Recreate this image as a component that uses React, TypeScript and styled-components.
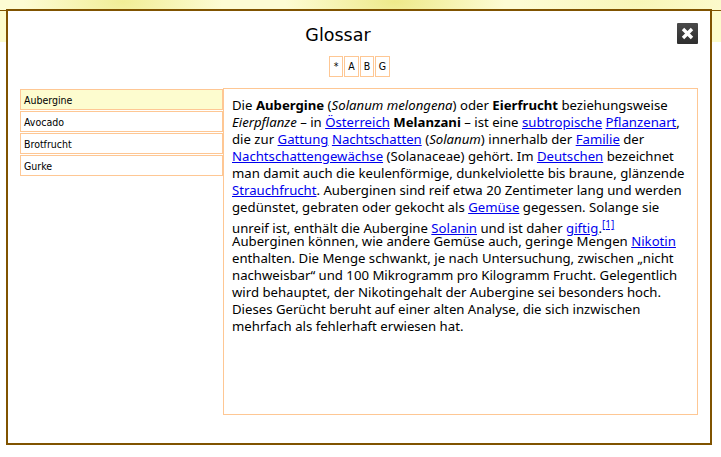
import React from "react";
import styled, { createGlobalStyle } from "styled-components";

const Global = createGlobalStyle`
  html, body { margin: 0; padding: 0; background: #fff; }
  #root { width: 721px; height: 457px; overflow: hidden; }
`;
const Page = styled.div`
  position: relative;
  width: 721px;
  height: 457px;
  background: #fff;
  font-family: "Noto Sans", "Open Sans", sans-serif;
`;
const Banner = styled.div`
  height: 42px;
  background: #fdfccc;
`;
const BannerStrip = styled.div`
  height: 10px;
  border-bottom: 1px solid #805300;
  background:
    radial-gradient(ellipse 100px 40px at 123px 2px, #f1ed96 0%, rgba(241, 237, 150, 0) 100%),
    radial-gradient(ellipse 110px 40px at 395px 2px, #eee98a 0%, rgba(238, 233, 138, 0) 100%),
    radial-gradient(ellipse 120px 40px at 640px 2px, #f8f6b8 0%, rgba(248, 246, 184, 0) 100%),
    #fdfcd4;
`;
const Modal = styled.div`
  position: absolute;
  left: 6px;
  top: 9px;
  width: 706px;
  height: 436px;
  box-sizing: border-box;
  border: 2px solid #805300;
  background: #fff;
  display: flex;
  flex-direction: column;
  padding: 0 12px;
`;
const Title = styled.h1`
  margin: 12px 0 0;
  padding-right: 42px;
  font: 400 17.5px/24px "DejaVu Sans", sans-serif;
  text-align: center;
  color: #000;
`;
const Close = styled.button`
  position: absolute;
  right: 12px;
  top: 12px;
  width: 21px;
  height: 21px;
  padding: 0;
  border: 0;
  border-radius: 1px;
  background: linear-gradient(#4a4a4a, #2e2e2e);
  display: flex;
  align-items: center;
  justify-content: center;
`;
const Letters = styled.div`
  display: flex;
  justify-content: center;
  gap: 1px;
  margin-top: 9px;
  padding-left: 1px;
`;
const Letter = styled.a<{ $w: number }>`
  box-sizing: border-box;
  height: 21px;
  width: ${(p) => p.$w}px;
  border: 1px solid #fec794;
  font: 10.5px/19px "DejaVu Sans Condensed", "DejaVu Sans", sans-serif;
  font-stretch: condensed;
  color: #000;
  text-align: center;
`;
const Columns = styled.div`
  display: flex;
  margin-top: 11px;
`;
const List = styled.div`
  width: 203px;
  margin-top: 1px;
  display: flex;
  flex-direction: column;
  gap: 1px;
`;
const Item = styled.div<{ $active?: boolean }>`
  box-sizing: border-box;
  height: 21px;
  border: 1px solid #fec794;
  background: ${(p) => (p.$active ? "#fdfccf" : "#fff")};
  font: 10.5px/18px "DejaVu Sans Condensed", "DejaVu Sans", sans-serif;
  font-stretch: condensed;
  padding: 1px 0 0 3px;
  color: #000;
`;
const Article = styled.div`
  box-sizing: border-box;
  width: 475px;
  height: 327px;
  border: 1px solid #fec794;
  padding: 8px 8px;
  font-size: 13.18px;
  line-height: 17px;
  color: #000;
  a { color: #0000ee; text-decoration: underline; }
`;
const Paragraph = styled.p`
  margin: 0;
  & + & { margin-top: -4px; }
`;
const Ref = styled.sup`
  font-size: 10px;
  line-height: 17px;
  vertical-align: 5px;
`;

export default function App() {
  return (
    <Page>
      <Global />
      <Banner>
        <BannerStrip />
      </Banner>
      <Modal>
        <Title>Glossar</Title>
        <Close aria-label="Schließen">
          <svg width="13" height="13" viewBox="0 0 13 13">
            <path d="M2 2 L11 11 M11 2 L2 11" stroke="#fff" strokeWidth="3.4" />
          </svg>
        </Close>
        <Letters>
          <Letter $w={14}>*</Letter>
          <Letter $w={15}>A</Letter>
          <Letter $w={14}>B</Letter>
          <Letter $w={15}>G</Letter>
        </Letters>
        <Columns>
          <List>
            <Item $active>Aubergine</Item>
            <Item>Avocado</Item>
            <Item>Brotfrucht</Item>
            <Item>Gurke</Item>
          </List>
          <Article>
            <Paragraph>
              Die <b>Aubergine</b> (<i>Solanum melongena</i>) oder <b>Eierfrucht</b> beziehungsweise{" "}
              <i>Eierpflanze</i> – in <a>Österreich</a> <b>Melanzani</b> – ist eine <a>subtropische</a>{" "}
              <a>Pflanzenart</a>, die zur <a>Gattung</a> <a>Nachtschatten</a> (<i>Solanum</i>) innerhalb der{" "}
              <a>Familie</a> der <a>Nachtschattengewächse</a> (Solanaceae) gehört. Im <a>Deutschen</a> bezeichnet
              man damit auch die keulenförmige, dunkelviolette bis braune, glänzende <a>Strauchfrucht</a>.
              Auberginen sind reif etwa 20 Zentimeter lang und werden gedünstet, gebraten oder gekocht als{" "}
              <a>Gemüse</a> gegessen. Solange sie unreif ist, enthält die Aubergine <a>Solanin</a> und ist daher{" "}
              <a>giftig</a>.<Ref><a>[1]</a></Ref>
            </Paragraph>
            <Paragraph>
              Auberginen können, wie andere Gemüse auch, geringe Mengen <a>Nikotin</a> enthalten. Die Menge
              schwankt, je nach Untersuchung, zwischen „nicht nachweisbar“ und 100 Mikrogramm pro Kilogramm
              Frucht. Gelegentlich wird behauptet, der Nikotingehalt der Aubergine sei besonders hoch. Dieses
              Gerücht beruht auf einer alten Analyse, die sich inzwischen mehrfach als fehlerhaft erwiesen hat.
            </Paragraph>
          </Article>
        </Columns>
      </Modal>
    </Page>
  );
}
